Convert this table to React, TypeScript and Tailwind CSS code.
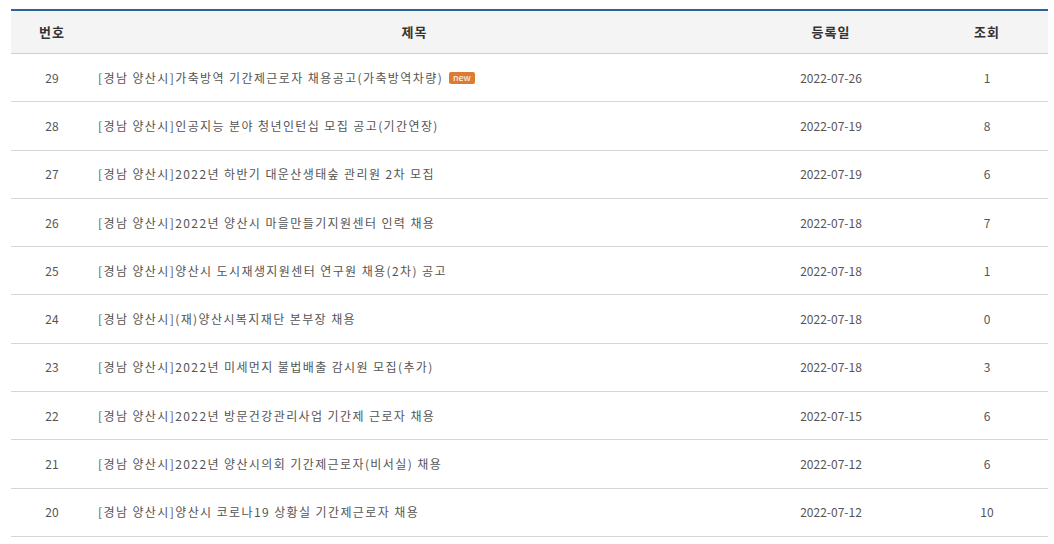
const rows = [
  { no: 29, title: '[경남 양산시]가축방역 기간제근로자 채용공고(가축방역차량)', date: '2022-07-26', views: 1, isNew: true },
  { no: 28, title: '[경남 양산시]인공지능 분야 청년인턴십 모집 공고(기간연장)', date: '2022-07-19', views: 8 },
  { no: 27, title: '[경남 양산시]2022년 하반기 대운산생태숲 관리원 2차 모집', date: '2022-07-19', views: 6 },
  { no: 26, title: '[경남 양산시]2022년 양산시 마을만들기지원센터 인력 채용', date: '2022-07-18', views: 7 },
  { no: 25, title: '[경남 양산시]양산시 도시재생지원센터 연구원 채용(2차) 공고', date: '2022-07-18', views: 1 },
  { no: 24, title: '[경남 양산시](재)양산시복지재단 본부장 채용', date: '2022-07-18', views: 0 },
  { no: 23, title: '[경남 양산시]2022년 미세먼지 불법배출 감시원 모집(추가)', date: '2022-07-18', views: 3 },
  { no: 22, title: '[경남 양산시]2022년 방문건강관리사업 기간제 근로자 채용', date: '2022-07-15', views: 6 },
  { no: 21, title: '[경남 양산시]2022년 양산시의회 기간제근로자(비서실) 채용', date: '2022-07-12', views: 6 },
  { no: 20, title: '[경남 양산시]양산시 코로나19 상황실 기간제근로자 채용', date: '2022-07-12', views: 10 },
];

const font = { fontFamily: '"Noto Sans CJK KR", "Liberation Sans", sans-serif' };

export default function App() {
  return (
    <div className="h-[544px] w-[1054px] bg-white pt-[9px] pl-[11px]" style={font}>
      <div className="w-[1037px] border-t-2 border-[#2b6396]">
        <div className="flex h-[43px] items-center border-b border-[#cfcfcf] bg-[#f4f4f4] text-[13px] font-semibold tracking-[1px] text-[#333]">
          <div className="w-[82px] text-center">번호</div>
          <div className="w-[643px] text-center">제목</div>
          <div className="w-[190px] text-center">등록일</div>
          <div className="w-[122px] text-center">조회</div>
        </div>
        {rows.map((r) => (
          <div
            key={r.no}
            className="flex h-[48.3px] items-center border-b border-[#d6d6d6] text-[12px] text-[#555]"
          >
            <div className="w-[82px] text-center">{r.no}</div>
            <div className="flex w-[643px] items-center gap-[6px] pl-[5px]">
              <span className="tracking-[1.4px]">{r.title}</span>
              {r.isNew && (
                <span className="rounded-[2px] bg-[#dd7b34] px-[4px] text-[9px] leading-[12px] text-white">new</span>
              )}
            </div>
            <div className="w-[190px] text-center">{r.date}</div>
            <div className="w-[122px] text-center">{r.views}</div>
          </div>
        ))}
      </div>
    </div>
  );
}
